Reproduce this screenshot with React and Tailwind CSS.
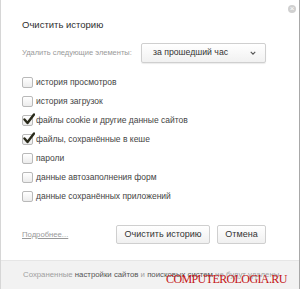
import { useState } from "react";

const items = [
  { label: "история просмотров", checked: false },
  { label: "история загрузок", checked: false },
  { label: "файлы cookie и другие данные сайтов", checked: true },
  { label: "файлы, сохранённые в кеше", checked: true },
  { label: "пароли", checked: false },
  { label: "данные автозаполнения форм", checked: false },
  { label: "данные сохранённых приложений", checked: false },
];

const Checkbox = ({ checked }) => (
  <span className="relative w-[11px] h-[11px] shrink-0 rounded-[2px] border border-[#b9b9b9] bg-gradient-to-b from-white to-[#ececec]">
    {checked && (
      <svg viewBox="0 0 12 12" className="absolute left-[0px] top-[-3px] w-[12px] h-[12px]">
        <path d="M1.5 6.5 L4.5 10 L11 1.5" fill="none" stroke="#2a2a1a" strokeWidth="2.4" strokeLinecap="round" strokeLinejoin="round" />
      </svg>
    )}
  </span>
);

const App = () => {
  const [rows, setRows] = useState(items);

  const toggle = (i) => {
    setRows(rows.map((r, j) => (j === i ? { ...r, checked: !r.checked } : r)));
  };

  return (
    <div className="relative w-[300px] h-[289px] bg-white overflow-hidden font-['Liberation_Sans',Arial,sans-serif] border-l border-[#d6d6d6] border-r border-r-[#a8a8a8]">
      {/* close */}
      <div className="absolute right-[3px] top-[5px] w-[8px] h-[8px] rounded-full bg-[#d0d0d0] flex items-center justify-center text-white text-[8px] leading-none">
        ×
      </div>

      <div className="flex flex-col h-full">
        <div className="flex-1 pl-[21px] pr-[33px]">
          <h2 className="pt-[17px] text-[9.5px] leading-[15px] text-[#2e2e2e]">Очистить историю</h2>

          <div className="mt-[11px] flex items-center">
            <span className="text-[7.5px] text-[#9a9a9a] whitespace-nowrap">Удалить следующие элементы:</span>
            <div className="ml-auto flex items-center justify-between w-[125px] h-[20px] border border-[#cfcfcf] rounded-[2px] bg-gradient-to-b from-white to-[#f1f1f1] shadow-[0_1px_1px_rgba(0,0,0,0.08)] pl-[11px] pr-[9px]">
              <span className="text-[8.7px] text-[#333] whitespace-nowrap">за прошедший час</span>
              <svg viewBox="0 0 8 5" className="w-[6px] h-[4px]">
                <path d="M1 1 L4 4 L7 1" fill="none" stroke="#555" strokeWidth="1.5" />
              </svg>
            </div>
          </div>

          <div className="mt-[14px] flex flex-col gap-[8px]">
            {rows.map((r, i) => (
              <label key={r.label} onClick={() => toggle(i)} className="flex items-center gap-[3px] h-[11px] cursor-pointer">
                <Checkbox checked={r.checked} />
                <span className="text-[8.5px] text-[#444] leading-none whitespace-nowrap">{r.label}</span>
              </label>
            ))}
          </div>

          <div className="mt-[23px] flex items-center">
            <a className="text-[7.7px] text-[#999] underline">Подробнее...</a>
            <div className="ml-auto flex gap-[7px]">
              <button className="w-[94px] h-[19px] border border-[#cfcfcf] rounded-[2px] bg-gradient-to-b from-white to-[#f0f0f0] text-[9px] text-[#333] whitespace-nowrap">
                Очистить историю
              </button>
              <button className="w-[49px] h-[19px] border border-[#cfcfcf] rounded-[2px] bg-gradient-to-b from-white to-[#f0f0f0] text-[9px] text-[#333]">
                Отмена
              </button>
            </div>
          </div>
        </div>

        <div className="h-[29px] bg-[#f2f2f2] border-t border-[#e6e6e6] pl-[22px] flex items-center text-[7.8px] text-[#a0a0a0] whitespace-nowrap">
          <span>
            Сохраненные <span className="text-[#555]">настройки сайтов</span> и <span className="text-[#555]">поисковых систем</span> не будут удалены
          </span>
        </div>
      </div>

      <div className="absolute left-[165px] top-[273px] text-[12px] leading-[13px] tracking-[-0.6px] text-[#c41414] font-['Liberation_Serif',serif] whitespace-nowrap">
        COMPUTEROLOGIA.RU
      </div>
    </div>
  );
};

export default App;
